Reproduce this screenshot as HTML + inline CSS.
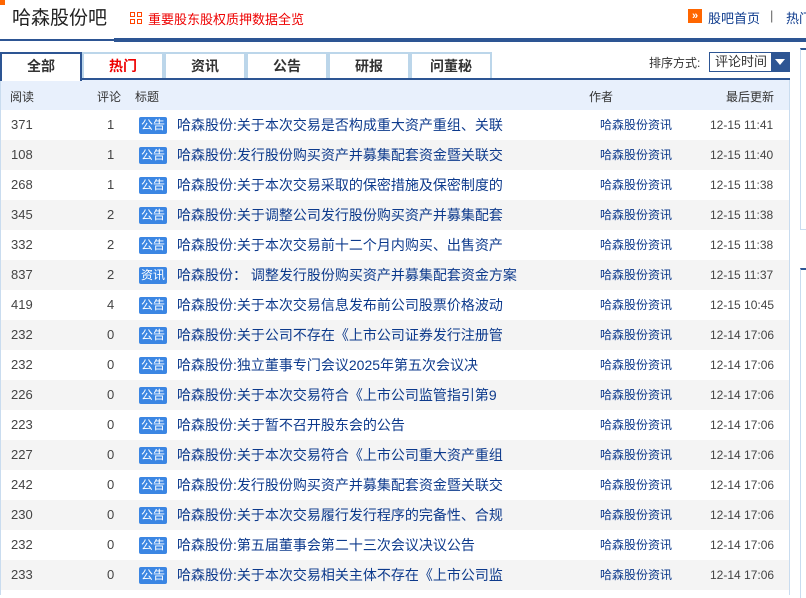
<!DOCTYPE html>
<html><head><meta charset="utf-8"><style>
*{margin:0;padding:0;box-sizing:border-box}
body{width:806px;height:595px;overflow:hidden;background:#fff;font-family:"Liberation Sans","Noto Sans CJK SC",sans-serif;font-size:13px;color:#333;position:relative;white-space:nowrap}
.a{position:absolute}
.row{position:absolute;left:1px;width:788px;height:30px;font-size:12px}
.row span{position:absolute;top:8px;line-height:14px}
.g{background:#f4f4f4}
.n{left:10px;color:#444;font-size:13px}
.c{left:106px;color:#444;font-size:13px}
.b{left:138px;top:7px!important;background:#3b86e3;color:#fff;font-size:12px;padding:1px 2px;line-height:15px!important;border-radius:2px;height:17px}
.t{left:176px;color:#0d3a8c;font-size:14px;top:7px!important;line-height:16px!important}
.au{left:599px;color:#0d3a8c}
.tm{left:709px;color:#444;font-size:12px}
.tab{position:absolute;top:52px;height:27px;width:82px;border:2px solid #bcd6ea;border-bottom:none;text-align:center;font-weight:bold;font-size:14px;line-height:25px;color:#333;background:#fff}
</style></head><body>
<div class="a" style="left:0;top:0;width:5px;height:5px;background:#f60"></div>
<div class="a" style="left:12px;top:7px;font-size:19px;color:#222;line-height:24px">哈森股份吧</div>
<div class="a" style="left:130px;top:12px;width:12px;height:12px;display:grid;grid-template-columns:5px 5px;gap:2px"><i style="border:1px solid #f40"></i><i style="border:1px solid #f40"></i><i style="border:1px solid #f40"></i><i style="border:1px solid #f40"></i></div>
<div class="a" style="left:148px;top:9px;color:#e00;font-size:13px">重要股东股权质押数据全览</div>
<div class="a" style="left:688px;top:9px;width:14px;height:14px;background:#f60;color:#fff;font-size:11px;line-height:14px;text-align:center;font-weight:bold">»</div>
<div class="a" style="left:708px;top:8px;color:#0d3a8c;font-size:13px">股吧首页</div>
<div class="a" style="left:770px;top:8px;color:#666">|</div>
<div class="a" style="left:786px;top:8px;color:#0d3a8c;font-size:13px">热门</div>
<div class="a" style="left:0;top:39px;width:114px;height:2px;background:#2d5593"></div>
<div class="a" style="left:114px;top:38px;width:692px;height:4px;background:#2d5593"></div>
<div class="tab" style="left:0;border-color:#2d5593;height:29px;z-index:2">全部</div>
<div class="tab" style="left:82px;color:#e00">热门</div>
<div class="tab" style="left:164px">资讯</div>
<div class="tab" style="left:246px">公告</div>
<div class="tab" style="left:328px">研报</div>
<div class="tab" style="left:410px">问董秘</div>
<div class="a" style="left:649px;top:54px;font-size:12px">排序方式:</div>
<div class="a" style="left:709px;top:52px;width:81px;height:20px;border:1px solid #2d5593;font-size:13px;line-height:18px;padding-left:5px">评论时间</div>
<div class="a" style="left:771px;top:52px;width:19px;height:20px;background:#2d5593"><div style="margin:7px 0 0 4px;width:0;height:0;border-left:5px solid transparent;border-right:5px solid transparent;border-top:6px solid #fff"></div></div>
<div class="a" style="left:0;top:78px;width:790px;height:2px;background:#2d5593"></div>
<div class="a" style="left:0;top:80px;width:1px;height:515px;background:#c9dcef"></div>
<div class="a" style="left:789px;top:80px;width:1px;height:515px;background:#c9dcef"></div>
<div class="a" style="left:1px;top:80px;width:788px;height:30px;background:#e8f0fc;font-size:12px">
<span class="a" style="left:9px;top:8px">阅读</span><span class="a" style="left:96px;top:8px">评论</span><span class="a" style="left:134px;top:8px">标题</span><span class="a" style="left:588px;top:8px">作者</span><span class="a" style="left:725px;top:8px">最后更新</span></div>
<div class="a" style="left:800px;top:48px;width:6px;height:182px;border:1px solid #c9dcef;border-top:2px solid #2d5593;border-right:none"></div>
<div class="a" style="left:800px;top:268px;width:6px;height:330px;border-left:1px solid #c9dcef;border-top:2px solid #2d5593"></div>
<div class="row" style="top:110px"><span class="n">371</span><span class="c">1</span><span class="b">公告</span><span class="t">哈森股份:关于本次交易是否构成重大资产重组、关联</span><span class="au">哈森股份资讯</span><span class="tm">12-15 11:41</span></div>
<div class="row g" style="top:140px"><span class="n">108</span><span class="c">1</span><span class="b">公告</span><span class="t">哈森股份:发行股份购买资产并募集配套资金暨关联交</span><span class="au">哈森股份资讯</span><span class="tm">12-15 11:40</span></div>
<div class="row" style="top:170px"><span class="n">268</span><span class="c">1</span><span class="b">公告</span><span class="t">哈森股份:关于本次交易采取的保密措施及保密制度的</span><span class="au">哈森股份资讯</span><span class="tm">12-15 11:38</span></div>
<div class="row g" style="top:200px"><span class="n">345</span><span class="c">2</span><span class="b">公告</span><span class="t">哈森股份:关于调整公司发行股份购买资产并募集配套</span><span class="au">哈森股份资讯</span><span class="tm">12-15 11:38</span></div>
<div class="row" style="top:230px"><span class="n">332</span><span class="c">2</span><span class="b">公告</span><span class="t">哈森股份:关于本次交易前十二个月内购买、出售资产</span><span class="au">哈森股份资讯</span><span class="tm">12-15 11:38</span></div>
<div class="row g" style="top:260px"><span class="n">837</span><span class="c">2</span><span class="b">资讯</span><span class="t">哈森股份： 调整发行股份购买资产并募集配套资金方案</span><span class="au">哈森股份资讯</span><span class="tm">12-15 11:37</span></div>
<div class="row" style="top:290px"><span class="n">419</span><span class="c">4</span><span class="b">公告</span><span class="t">哈森股份:关于本次交易信息发布前公司股票价格波动</span><span class="au">哈森股份资讯</span><span class="tm">12-15 10:45</span></div>
<div class="row g" style="top:320px"><span class="n">232</span><span class="c">0</span><span class="b">公告</span><span class="t">哈森股份:关于公司不存在《上市公司证券发行注册管</span><span class="au">哈森股份资讯</span><span class="tm">12-14 17:06</span></div>
<div class="row" style="top:350px"><span class="n">232</span><span class="c">0</span><span class="b">公告</span><span class="t">哈森股份:独立董事专门会议2025年第五次会议决</span><span class="au">哈森股份资讯</span><span class="tm">12-14 17:06</span></div>
<div class="row g" style="top:380px"><span class="n">226</span><span class="c">0</span><span class="b">公告</span><span class="t">哈森股份:关于本次交易符合《上市公司监管指引第9</span><span class="au">哈森股份资讯</span><span class="tm">12-14 17:06</span></div>
<div class="row" style="top:410px"><span class="n">223</span><span class="c">0</span><span class="b">公告</span><span class="t">哈森股份:关于暂不召开股东会的公告</span><span class="au">哈森股份资讯</span><span class="tm">12-14 17:06</span></div>
<div class="row g" style="top:440px"><span class="n">227</span><span class="c">0</span><span class="b">公告</span><span class="t">哈森股份:关于本次交易符合《上市公司重大资产重组</span><span class="au">哈森股份资讯</span><span class="tm">12-14 17:06</span></div>
<div class="row" style="top:470px"><span class="n">242</span><span class="c">0</span><span class="b">公告</span><span class="t">哈森股份:发行股份购买资产并募集配套资金暨关联交</span><span class="au">哈森股份资讯</span><span class="tm">12-14 17:06</span></div>
<div class="row g" style="top:500px"><span class="n">230</span><span class="c">0</span><span class="b">公告</span><span class="t">哈森股份:关于本次交易履行发行程序的完备性、合规</span><span class="au">哈森股份资讯</span><span class="tm">12-14 17:06</span></div>
<div class="row" style="top:530px"><span class="n">232</span><span class="c">0</span><span class="b">公告</span><span class="t">哈森股份:第五届董事会第二十三次会议决议公告</span><span class="au">哈森股份资讯</span><span class="tm">12-14 17:06</span></div>
<div class="row g" style="top:560px"><span class="n">233</span><span class="c">0</span><span class="b">公告</span><span class="t">哈森股份:关于本次交易相关主体不存在《上市公司监</span><span class="au">哈森股份资讯</span><span class="tm">12-14 17:06</span></div>
</body></html>
